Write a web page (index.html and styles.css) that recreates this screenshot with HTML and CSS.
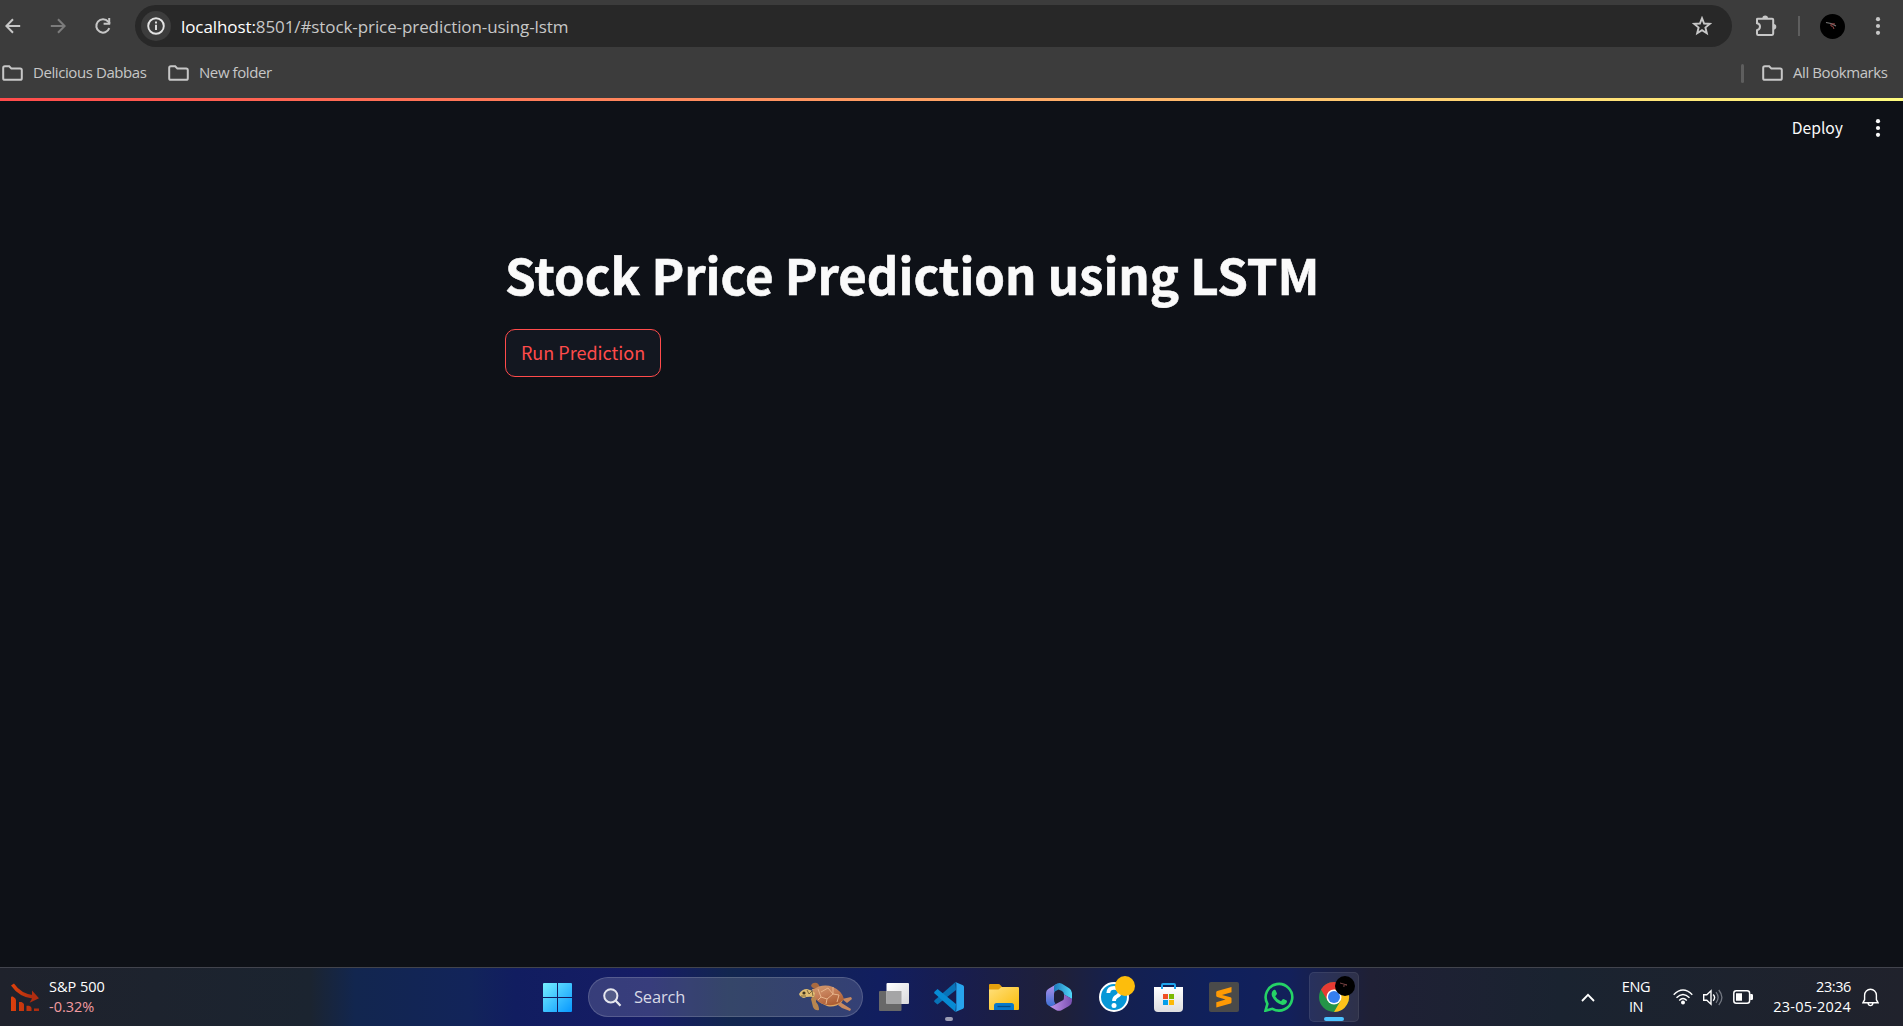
FILE: index.html
```html
<!DOCTYPE html>
<html lang="en">
<head>
<meta charset="utf-8">
<title>Stock Price Prediction using LSTM</title>
<link rel="stylesheet" href="styles.css">
</head>
<body>
<svg class="defs" width="0" height="0" aria-hidden="true">
  <symbol id="folder" viewBox="0 0 21 16"><path d="M1.2 13.2V2.8Q1.2 1.2 2.8 1.2H7.2L9.4 3.6H18.2Q19.8 3.6 19.8 5.2V13.2Q19.8 14.8 18.2 14.8H2.8Q1.2 14.8 1.2 13.2Z" fill="none" stroke="currentColor" stroke-width="2"/></symbol>
  <symbol id="dots" viewBox="0 0 6 18"><circle cx="3" cy="2.2" r="2.1"/><circle cx="3" cy="9" r="2.1"/><circle cx="3" cy="15.8" r="2.1"/></symbol>
</svg>
<header class="browser">
  <div class="toolbar">
    <div class="nav">
      <svg width="16" height="16" viewBox="0 0 16 16"><path d="M15.2 8H1.8M8 1.2L1.4 8L8 14.8" fill="none" stroke="#c7c7c7" stroke-width="2"/></svg>
      <svg width="16" height="16" viewBox="0 0 16 16"><path d="M.8 8H14.2M8 1.2L14.6 8L8 14.8" fill="none" stroke="#7c7c7c" stroke-width="2"/></svg>
      <svg width="18" height="18" viewBox="0 0 18 18"><path d="M15.3 11.2A6.7 6.7 0 1 1 14.2 4.7L16 6.6" fill="none" stroke="#c7c7c7" stroke-width="2"/><path d="M16.2 1V7.8H9.6V5.8H14.2V1Z" fill="#c7c7c7"/></svg>
    </div>
    <div class="omnibox">
      <span class="site-info"><svg width="18" height="18" viewBox="0 0 18 18"><circle cx="9" cy="9" r="7.8" fill="none" stroke="#e3e3e3" stroke-width="1.9"/><path d="M9 7.8V13M9 4.6V6.4" stroke="#e3e3e3" stroke-width="1.9"/></svg></span>
      <span class="url"><b>localhost:</b>8501/#stock-price-prediction-using-lstm</span>
      <svg class="star" width="20" height="20" viewBox="0 0 20 20"><path d="M10 2.2L12.1 7.5L17.8 7.9L13.4 11.6L14.8 17.2L10 14.1L5.2 17.2L6.6 11.6L2.2 7.9L7.9 7.5Z" fill="none" stroke="#c7c7c7" stroke-width="1.9"/></svg>
    </div>
    <div class="actions">
      <svg width="22" height="22" viewBox="0 0 22 22"><path d="M2 4Q2 3.7 2.7 3.7H17.2Q18.2 3.7 18.2 4.7V18.6Q18.2 19.9 17 19.9H3.2Q2 19.9 2 18.7V15.3Q5 14.6 5 11.6Q5 8.9 2 8.2Z" fill="none" stroke="#c7c7c7" stroke-width="2"/><path d="M7.4 3.4A2.8 2.8 0 0 1 13 3.4ZM18.5 9A2.8 2.8 0 0 1 18.5 14.6Z" fill="#c7c7c7"/></svg>
      <span class="sep"></span>
      <svg width="25" height="25" viewBox="0 0 25 25"><circle cx="12.5" cy="12.5" r="12.5" fill="#000"/><path d="M6 8.5L11 9.5L16 12" fill="none" stroke="#777" stroke-width="1.2"/><path d="M15 10Q10 9 11 12Q13 11 14 15" fill="none" stroke="#9b4545"/></svg>
      <svg class="menu" width="6" height="18" fill="#c7c7c7"><use href="#dots"/></svg>
    </div>
  </div>
  <div class="bookmarks">
    <div class="mark first"><svg width="21" height="16"><use href="#folder"/></svg><span>Delicious Dabbas</span></div>
    <div class="mark"><svg width="21" height="16"><use href="#folder"/></svg><span>New folder</span></div>
    <div class="mark all"><i class="bar"></i><svg width="21" height="16"><use href="#folder"/></svg><span>All Bookmarks</span></div>
  </div>
</header>
<main class="app">
  <div class="app-bar"><span class="deploy">Deploy</span><svg width="6" height="18" fill="#fafafa"><use href="#dots"/></svg></div>
  <section class="content">
    <h1>Stock Price Prediction using LSTM</h1>
    <button>Run Prediction</button>
  </section>
</main>
<footer class="taskbar">
  <div class="widget">
    <svg width="28" height="29" viewBox="0 0 28 29"><defs><linearGradient id="dn"><stop stop-color="#dc400c"/><stop offset="1" stop-color="#a92b10"/></linearGradient></defs><path d="M1.5 1.5Q9 12.5 22.5 14" fill="none" stroke="url(#dn)" stroke-width="3.6"/><path d="M21 7.5L28 15.3L18.6 19.8L21 15.5Z" fill="#b02d10"/><path d="M0 28V14.5Q0 13 1.7 13.5Q5 15 5 17V28ZM8 28V19H10.5Q13 20 13 21.5V28ZM15.5 28V22.7H18Q20.5 23.5 20.5 25V28ZM23 28V25.5H28V28Z" fill="url(#dn)"/></svg>
    <div class="quote"><span>S&amp;P 500</span><span class="chg">-0.32%</span></div>
  </div>
  <div class="dock">
    <span class="cell"><svg width="29" height="29" viewBox="0 0 29 29"><defs><linearGradient id="win" x2="29" y2="29" gradientUnits="userSpaceOnUse"><stop stop-color="#76efff"/><stop offset="1" stop-color="#0798ff"/></linearGradient></defs><path d="M1 0H14V14H0V1Q0 0 1 0ZM15 0H28Q29 0 29 1V14H15ZM0 15H14V29H1Q0 29 0 28ZM15 15H29V28Q29 29 28 29H15Z" fill="url(#win)"/></svg></span>
    <div class="search">
      <svg width="19" height="19" viewBox="0 0 19 19"><circle cx="7.8" cy="7.8" r="6.6" fill="#535b88" stroke="#e5e6ee" stroke-width="2"/><path d="M12.5 12.5L17.5 17.7" stroke="#e5e6ee" stroke-width="2.3"/></svg>
      <span class="find">Search</span>
      <svg class="turtle" width="54" height="30" viewBox="0 0 54 30"><defs><linearGradient id="shell" x1="0" y1="0" x2=".5" y2="1"><stop stop-color="#d29c70"/><stop offset=".5" stop-color="#c57e58"/><stop offset="1" stop-color="#ad5f35"/></linearGradient></defs>
        <path d="M12 4Q13 0 18 1Q22 4 20 8Q16 9 12 4Z" fill="#a86a40"/>
        <path d="M14 13Q18 15 17 20Q20 23 20 28Q16 29 14 25L12 17Z" fill="#b8864f"/>
        <path d="M13 7Q15 20 28 24Q36 26 43 20L44 17L36 8Z" fill="#dfa662"/>
        <path d="M43 17L52 15L53 17L48 21ZM41 20L52 27L51 29L43 26L39 23Z" fill="#c98a60"/>
        <path d="M14 8Q23 1 34 5Q43 9 45 17Q41 22 34 23Q22 24 17 17Q14 13 14 8Z" fill="url(#shell)"/>
        <path d="M19 7L22 15L19 18M22 15L28 17L27 22M28 17L34 12L29 6L22 10M34 12L40 13L38 20M34 12L34 5" fill="none" stroke="#e8b48a" stroke-width="1"/>
        <path d="M0 12Q3 7 8 7Q13 8 16 11L15 15Q8 14 5 16Q1 15 0 12Z" fill="#e0bd72"/><circle cx="5" cy="11" r="1.6" fill="#413621"/><path d="M8 8L10 12L13 9L14 14M2 14L7 14" fill="none" stroke="#69532f" stroke-width=".8"/></svg>
    </div>
    <div class="apps">
      <span class="cell"><svg width="30" height="30" viewBox="0 0 30 30"><defs><linearGradient id="tv" x2="1" y2="1"><stop stop-color="#fff"/><stop offset="1" stop-color="#d9d9dc"/></linearGradient></defs><rect y="9" width="22.5" height="20" rx="1" fill="#686868"/><rect x="7.5" y="1" width="22.5" height="21" rx="1" fill="url(#tv)"/><path d="M7.5 9H22.5V22H7.5Z" fill="#a5a5a6"/></svg></span>
      <span class="cell running"><svg width="30" height="30" viewBox="0 0 30 30"><path d="M21.5 0L22 8L3.5 22.5L.5 20Q-.2 19.2 .6 18.3Z" fill="#0873b8"/><path d="M21.5 30L22 22L3.5 7L.5 9.7Q-.2 10.6 .6 11.6Z" fill="#078bd4"/><path d="M21.3 0L29 3.3Q30 3.8 30 5V25Q30 26.2 29 26.7L21.3 30Q22.3 29 22.3 27.5V2.3Q22.3 1 21.3 0Z" fill="#27a4ed"/></svg></span>
      <span class="cell"><svg width="30" height="28" viewBox="0 0 30 28"><defs><linearGradient id="ex" x2="1" y2="1"><stop stop-color="#ffe07c"/><stop offset="1" stop-color="#fbbb08"/></linearGradient></defs><path d="M0 8V2Q0 1 1 1H9.5Q10.5 1 11.5 2.3L14 5V8Z" fill="#e5a00d"/><path d="M0 6.5H9.5L12.5 4H29Q30 4 30 5V26Q30 27 29 27H1Q0 27 0 26Z" fill="url(#ex)"/><path d="M5 27V22.5Q5 20 7.5 20H22.5Q25 20 25 22.5V27Z" fill="#0878cc"/><path d="M8.5 23.5H21.5" stroke="#084a83" stroke-width="1.3"/></svg></span>
      <span class="cell"><svg width="26" height="28" viewBox="0 0 26 28"><defs><linearGradient id="ma" x2="0" y2="1"><stop stop-color="#bd92ec"/><stop offset="1" stop-color="#376fd3"/></linearGradient><linearGradient id="mb"><stop stop-color="#1c77b8"/><stop offset="1" stop-color="#51d9fa"/></linearGradient><linearGradient id="mc"><stop stop-color="#c79bf0"/><stop offset="1" stop-color="#7950b1"/></linearGradient></defs><path d="M11.5 .4L3 5.5Q0 7 0 10.5V18Q0 21 2.8 22.7L6 24L9.5 20.5Q8 19 8 17V11Q8 8.5 10 7Z" fill="url(#ma)"/><path d="M8.5 2L11.5 .4Q13.5-.4 16 .8L23.2 5.2Q26 7 26 10V16L18 11.5Q18 9 16 8L12.5 6.4L8 9V4Q8 3 8.5 2Z" fill="url(#mb)"/><path d="M26 16V18Q26 21.2 23 23L15.5 27.2Q13 28.5 10.3 27.2L2.8 22.7Q5 24 8 22L17.3 17Q18.2 16 18 11.5L24.5 15Z" fill="url(#mc)"/></svg></span>
      <span class="cell"><svg class="help" width="36" height="36" viewBox="0 0 36 36"><circle cx="15" cy="21" r="14" fill="#0798d7" stroke="#fff" stroke-width="2"/><path d="M9.3 17Q9.5 11.8 15 11.8Q20.8 11.8 20.8 16.3Q20.8 19 17.8 20.4Q15 21.8 15 25" fill="none" stroke="#fff" stroke-width="3.8"/><circle cx="15" cy="29.6" r="2.5" fill="#fff"/><circle cx="26" cy="10" r="10" fill="#fdbd0c"/></svg></span>
      <span class="cell"><svg class="store" width="29" height="30" viewBox="0 0 29 30"><defs><linearGradient id="st" x2="0" y2="1"><stop stop-color="#fff"/><stop offset="1" stop-color="#dedee0"/></linearGradient></defs><path d="M0 5H29V26Q29 30 25 30H4Q0 30 0 26Z" fill="url(#st)"/><path d="M8 7V3Q8 2 9 2H20Q21 2 21 3V7" fill="none" stroke="#20a5ed" stroke-width="2"/><path d="M9 12H14V17H9Z" fill="#f04f22"/><path d="M15 12H20V17H15Z" fill="#7cb903"/><path d="M9 18H14V23H9Z" fill="#059feb"/><path d="M15 18H20V23H15Z" fill="#fcb908"/></svg></span>
      <span class="cell"><svg width="30" height="30" viewBox="0 0 30 30"><rect width="30" height="30" rx="2" fill="#4a4a4a"/><path d="M22.5 5V10.3L13 13L21.5 15.2Q22.5 15.5 22.5 16.5V20.3Q22.5 21 21.5 21.4L7.3 25.5V20.2L16.5 17.5L8.2 15Q7.2 14.6 7.2 13.7V10.3Q7.2 9.3 8.2 9Z" fill="#ff9a04"/></svg></span>
      <span class="cell"><svg width="30" height="30" viewBox="0 0 30 30"><path d="M1.5 28.7L3.4 21.8A13.3 13.3 0 1 1 8.4 26.8Z" fill="none" stroke="#25d366" stroke-width="2.6"/><path d="M10.7 7.8Q11.5 7.9 11.8 8.7L13 11.5Q13.2 12.2 11.2 14.2Q13 17.7 17 19.2L18.7 17.2Q19.2 16.8 20 17.2L22.7 18.6Q23.3 19 22.7 20.6Q21.7 23.3 18.4 23Q11.5 21.5 8 14.3Q6.8 10.5 9.3 8.2Q10 7.6 10.7 7.8Z" fill="#25d366"/></svg></span>
      <span class="cell active"><svg class="chrome" width="36" height="36" viewBox="0 0 36 36"><circle cx="15" cy="21" r="15" fill="#249448"/><path d="M2 13.5A15 15 0 0 1 28 13.5L15 15L8.5 24.7Z" fill="#e73a32"/><path d="M28 13.5A15 15 0 0 1 15 36L21.5 24.8L15 13.5Z" fill="#fcc11a"/><circle cx="15" cy="21" r="7.5" fill="#fff"/><circle cx="15" cy="21" r="6" fill="#347ff0"/><circle cx="26" cy="10" r="10" fill="#000"/><path d="M21 7L28 9Q24 8 25 11" fill="none" stroke="#754141"/></svg></span>
    </div>
  </div>
  <div class="tray">
    <svg width="14" height="9" viewBox="0 0 14 9"><path d="M1 8L7 1.8L13 8" fill="none" stroke="#fff" stroke-width="1.8"/></svg>
    <div class="lang"><span>ENG</span><span>IN</span></div>
    <div class="status">
      <svg width="20" height="16" viewBox="0 0 20 16"><g fill="none" stroke="#fff" stroke-width="1.4"><path d="M.7 5.7Q10-3.6 19.3 5.7M3.5 8.8Q10 2.1 16.5 8.8M6.2 11.4Q10 7.6 13.8 11.4"/></g><circle cx="10" cy="13.4" r="2" fill="#fff"/></svg>
      <svg width="20" height="17" viewBox="0 0 20 17"><path d="M.7 5.8H3.8L8 1.8V15.2L3.8 11.3H.7ZM10.2 5.5Q13 8.5 10.2 11.7" fill="none" stroke="#fff" stroke-width="1.4"/><path d="M13 3.2Q17.2 8.5 13 13.8M15.8 1Q22 8.5 15.8 16" fill="none" stroke="#737781" stroke-width="1.3"/></svg>
      <svg width="20" height="14" viewBox="0 0 20 14"><rect x=".8" y=".8" width="15.8" height="12.4" rx="2.5" fill="none" stroke="#fff" stroke-width="1.5"/><path d="M3 3.2H9V10.8H3ZM17.2 4H18.7Q20 4 20 5.3V8.7Q20 10 18.7 10H17.2Z" fill="#fff"/></svg>
    </div>
    <div class="clock"><span>23:36</span><span class="date">23-05-2024</span></div>
    <svg width="17" height="19" viewBox="0 0 17 19"><path d="M1 14.7L2.6 11.7V7.2A5.9 5.9 0 0 1 14.4 7.2V11.7L16 14.7ZM6 15.2Q6.5 17.6 8.5 17.6Q10.5 17.6 11 15.2" fill="none" stroke="#fff" stroke-width="1.4"/></svg>
  </div>
</footer>
</body>
</html>
```

FILE: styles.css
```css
* { box-sizing: border-box; }
body {
  margin: 0;
  width: 100vw;
  height: 100vh;
  display: flex;
  flex-direction: column;
  overflow: hidden;
  background: #0e1117;
  font-family: "Open Sans", "Noto Sans", sans-serif;
}
svg { display: block; flex: none; }
span { white-space: nowrap; }
.defs { position: absolute; }

.browser { height: 98px; background: #3c3c3c; }
.toolbar { height: 52px; display: flex; align-items: center; }
.nav { width: 135px; padding-left: 5px; display: flex; align-items: center; gap: 28.5px; }
.omnibox {
  width: 1597px;
  height: 42px;
  border-radius: 21px;
  background: #282828;
  padding: 0 20px 0 6px;
  display: flex;
  align-items: center;
}
.site-info {
  width: 30px;
  height: 30px;
  border-radius: 50%;
  background: #3c3c3c;
  display: grid;
  place-items: center;
}
.url { margin-left: 10px; font-size: 17px; letter-spacing: -0.09px; color: #c7c7c7; }
.url b { font-weight: 400; color: #fff; }
.star { margin-left: auto; }
.actions { flex: 1; padding-left: 23px; display: flex; align-items: center; }
.sep { width: 2px; height: 20px; margin: 0 20px 0 21px; background: #5e5e5e; }
.menu { margin-left: 30px; }

.bookmarks { height: 42px; display: flex; align-items: center; padding-left: 2px; color: #c7c7c7; font-size: 15px; letter-spacing: -0.42px; }
.bookmarks span { padding-bottom: 2px; }
.mark { display: flex; align-items: center; gap: 10px; }
.mark.first { width: 166px; }
.mark.all { margin-left: auto; width: 162px; }
.bar { width: 3px; height: 19px; border-radius: 2px; background: #5e5e5e; margin-right: 8px; }

.app { height: 869px; border-top: 3px solid; border-image: linear-gradient(90deg, #ff4b4b, #fffd80) 1; color: #fafafa; font-family: "Noto Sans CJK JP", sans-serif; }
.app-bar { height: 56px; display: flex; justify-content: flex-end; align-items: center; gap: 32px; padding: 0 22px 2px 0; }
.deploy { font-size: 15.7px; padding-bottom: 1px; }
.content { width: 893px; margin: 80px auto 0; }
h1 {
  margin: 0;
  height: 92px;
  line-height: 74px;
  font-size: 49.15px;
  font-weight: 700;
  white-space: nowrap;
  -webkit-text-stroke: 0.6px #fafafa;
}
button {
  width: 156px;
  height: 48px;
  padding: 0 0 2px;
  border: 1px solid #ff4b4b;
  border-radius: 10px;
  background: #131720;
  color: #ff4b4b;
  font: 400 18px "Noto Sans CJK JP", sans-serif;
}

.taskbar {
  height: 59px;
  border-top: 1px solid #42444d;
  display: grid;
  grid-template-columns: 532px 827px 1fr;
  align-items: center;
  color: #fff;
  background: linear-gradient(90deg, #1f222c 0, #1b2430 310px, #12264f 355px, #12245a 470px, #111d60 515px, #161c65 650px, #12264f 730px, #111e5f 880px, #181d4e 960px, #1f2038 1060px, #142050 1120px, #0f205c 1220px, #13205a 1290px, #1f2035 1370px, #1a2330 1560px, #20222c 100%);
}
.widget { padding-left: 11px; display: flex; align-items: center; gap: 10px; }
.quote, .lang, .clock { display: flex; flex-direction: column; font-size: 14.5px; line-height: 20px; letter-spacing: -0.4px; padding-bottom: 1px; }
.quote { letter-spacing: 0; }
.chg { color: #f39ba0; }
.dock { display: flex; align-items: center; }
.cell { position: relative; width: 50px; height: 50px; display: grid; place-items: center; border-radius: 5px; }
.search {
  width: 275px;
  height: 40px;
  margin: 0 6px;
  padding: 0 9px 0 14px;
  border: 1px solid rgba(255, 255, 255, .16);
  border-radius: 20px;
  background: rgba(255, 255, 255, .15);
  display: flex;
  align-items: center;
}
.find { margin-left: 12px; padding-bottom: 1px; font-size: 16.5px; letter-spacing: -0.2px; color: #d7d9e5; }
.turtle { margin-left: auto; }
.apps { display: flex; gap: 5px; }
.store { margin-right: 1px; }
.running::after, .active::after {
  content: "";
  position: absolute;
  left: 21px;
  bottom: 1px;
  width: 8px;
  height: 4px;
  border-radius: 2px;
  background: #9a9cb4;
}
.active { background: rgba(255, 255, 255, .08); border: 1px solid rgba(255, 255, 255, .07); }
.active::after { left: 14px; bottom: 0; width: 20px; background: #4cc2ff; }
.help, .chrome { margin: -6px -6px 0 0; }
.tray { display: flex; align-items: center; padding-left: 222px; }
.lang { width: 30px; margin-left: 26px; align-items: center; }
.status { margin-left: 22px; display: flex; align-items: center; gap: 10px; }
.clock { width: 98px; margin-right: 11px; align-items: flex-end; }
.date { letter-spacing: 0.2px; }
```
